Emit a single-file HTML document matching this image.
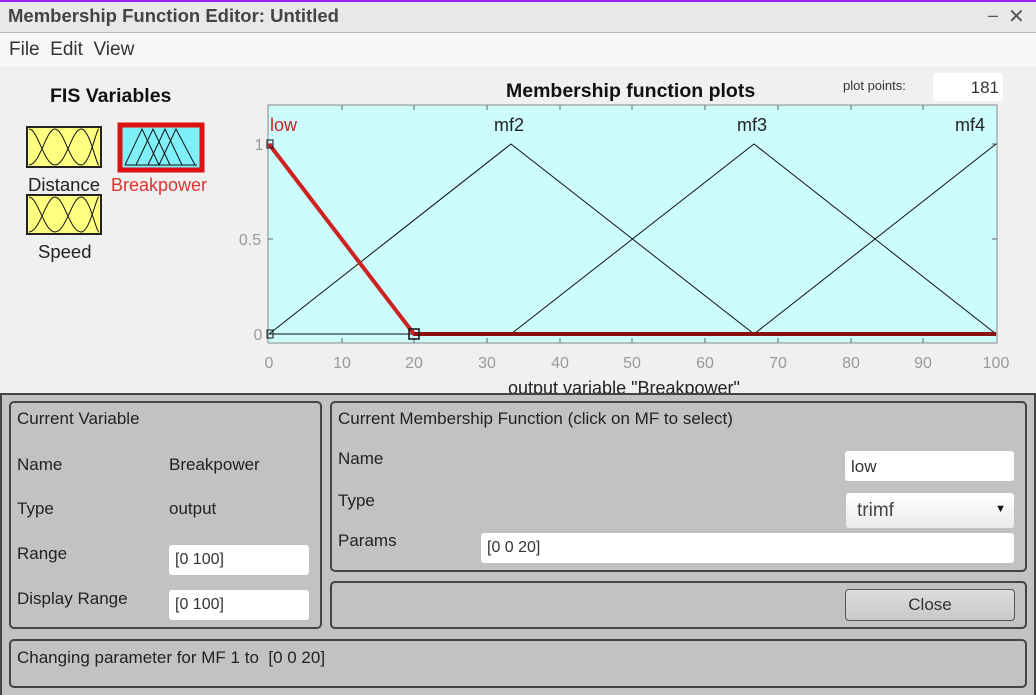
<!DOCTYPE html><html><head><style>
body{margin:0;width:1036px;height:695px;overflow:hidden;background:#f0f0f0;font-family:"Liberation Sans",sans-serif;position:relative}
.a{position:absolute}
.t{font-size:17px;color:#222}
.inp{position:absolute;background:#fff;border-radius:3px;font-size:16px;color:#333;box-sizing:border-box;padding:6px 0 0 6px}
.pn{position:absolute;border:2px solid #444;border-radius:5px;box-sizing:border-box}
</style></head><body>
<div class="a" style="left:0;top:0;width:1036px;height:2px;background:#a020f0"></div>
<div class="a" style="left:0;top:2px;width:1036px;height:30px;background:#e8e8e8;border-bottom:1px solid #bbb"></div>
<div class="a" style="left:8px;top:5px;font-size:18.5px;font-weight:bold;color:#444">Membership Function Editor: Untitled</div>
<div class="a" style="left:988px;top:5px;font-size:18px;color:#555">–</div>
<div class="a" style="left:1008px;top:4px;font-size:20px;color:#555">✕</div>
<div class="a" style="left:0;top:33px;width:1036px;height:34px;background:#f7f7f7"></div>
<div class="a" style="left:9px;top:39px;font-size:19px;color:#333">File&nbsp; Edit&nbsp; View</div>
<div class="a" style="left:50px;top:85px;font-size:19.5px;font-weight:bold;color:#111">FIS Variables</div>
<svg class="a" style="left:0;top:0" width="1036" height="400">
<g stroke="#111" stroke-width="1" fill="none">
<rect x="27" y="127" width="74" height="40" fill="#ffff80" stroke="#222" stroke-width="2"/>
<path d="M29 129 C38 129 44 165 55 165 M55 129 C46 129 40 165 29 165 M55 129 C64 129 70 165 81 165 M81 129 C72 129 66 165 55 165 M81 129 C90 129 96 165 99 165 M99 129 C96 129 90 165 81 165"/>
<rect x="27" y="195" width="74" height="39" fill="#ffff80" stroke="#222" stroke-width="2"/>
<path d="M29 197 C38 197 44 232 55 232 M55 197 C46 197 40 232 29 232 M55 197 C64 197 70 232 81 232 M81 197 C72 197 66 232 55 232 M81 197 C90 197 96 232 99 232 M99 197 C96 197 90 232 81 232"/>
<rect x="120" y="125" width="82" height="45" fill="#80f0f8" stroke="#dd1111" stroke-width="5"/>
<path d="M125 165 L142 129 L159 165 M136 165 L153 129 L170 165 M148 165 L165 129 L182 165 M159 165 L176 129 L195 165 M125 165 H197"/>
</g>
<text x="28" y="191" font-size="18.5" fill="#222" font-family="Liberation Sans">Distance</text>
<text x="111" y="191" font-size="18" fill="#dd3333" font-family="Liberation Sans">Breakpower</text>
<text x="38" y="258" font-size="18.5" fill="#222" font-family="Liberation Sans">Speed</text>
<text x="506" y="97" font-size="19.5" font-weight="bold" fill="#111" font-family="Liberation Sans">Membership function plots</text>
<text x="843" y="90" font-size="13" fill="#333" font-family="Liberation Sans">plot points:</text>
<rect x="268" y="105" width="729" height="238" fill="#ccfcfc" stroke="#888"/>
<g stroke="#666">
<path d="M342 105v5M414 105v5M487 105v5M560 105v5M632 105v5M705 105v5M778 105v5M851 105v5M923 105v5"/>
<path d="M342 343v-5M414 343v-5M487 343v-5M560 343v-5M632 343v-5M705 343v-5M778 343v-5M851 343v-5M923 343v-5"/>
<path d="M268 144h5M268 239h5M268 334h5M997 144h-5M997 239h-5M997 334h-5"/>
</g>
<g stroke="#111" fill="none" stroke-width="1">
<path d="M269 334 L511 144 L754 334 L996 144"/>
<path d="M511 334 L754 144 L996 334"/>
<path d="M269 334 H414"/>
</g>
<path d="M269 144 L414 334 H996" stroke="#cc2222" stroke-width="4" fill="none"/>
<path d="M414 334 H996" stroke="#881111" stroke-width="4"/>
<rect x="267" y="140" width="6" height="8" fill="none" stroke="#111"/>
<rect x="267" y="330" width="6" height="8" fill="none" stroke="#111"/>
<rect x="409" y="329" width="10" height="10" fill="none" stroke="#111" stroke-width="1.5"/>
<g font-family="Liberation Sans" font-size="18">
<text x="270" y="131" fill="#cc2222">low</text>
<text x="494" y="131" fill="#222">mf2</text>
<text x="737" y="131" fill="#222">mf3</text>
<text x="955" y="131" fill="#222">mf4</text>
</g>
<g font-family="Liberation Sans" font-size="16" fill="#999" text-anchor="middle">
<text x="259" y="150">1</text><text x="250" y="245">0.5</text><text x="258" y="340">0</text>
<text x="269" y="368">0</text><text x="342" y="368">10</text><text x="414" y="368">20</text><text x="487" y="368">30</text><text x="560" y="368">40</text><text x="632" y="368">50</text><text x="705" y="368">60</text><text x="778" y="368">70</text><text x="851" y="368">80</text><text x="923" y="368">90</text><text x="996" y="368">100</text>
</g>
<text x="508" y="394" font-size="18" fill="#222" font-family="Liberation Sans">output variable "Breakpower"</text>
</svg>
<div class="inp" style="left:933px;top:73px;width:70px;height:28px;text-align:right;padding:5px 4px 0 0;font-size:17px">181</div>
<div class="a" style="left:0;top:393px;width:1036px;height:302px;background:#c2c2c2;border-top:2px solid #444;border-left:2px solid #444;border-right:2px solid #444;box-sizing:border-box"></div>
<div class="pn" style="left:9px;top:401px;width:313px;height:228px"></div>
<div class="pn" style="left:330px;top:401px;width:697px;height:171px"></div>
<div class="pn" style="left:330px;top:581px;width:697px;height:48px"></div>
<div class="pn" style="left:9px;top:639px;width:1018px;height:49px"></div>
<div class="a t" style="left:17px;top:409px">Current Variable</div>
<div class="a t" style="left:17px;top:455px">Name</div>
<div class="a t" style="left:169px;top:455px">Breakpower</div>
<div class="a t" style="left:17px;top:499px">Type</div>
<div class="a t" style="left:169px;top:499px">output</div>
<div class="a t" style="left:17px;top:544px">Range</div>
<div class="a t" style="left:17px;top:589px">Display Range</div>
<div class="inp" style="left:169px;top:545px;width:140px;height:30px">[0 100]</div>
<div class="inp" style="left:169px;top:590px;width:140px;height:30px">[0 100]</div>
<div class="a t" style="left:338px;top:409px">Current Membership Function (click on MF to select)</div>
<div class="a t" style="left:338px;top:449px">Name</div>
<div class="a t" style="left:338px;top:491px">Type</div>
<div class="a t" style="left:338px;top:531px">Params</div>
<div class="inp" style="left:845px;top:451px;width:169px;height:30px;font-size:17px">low</div>
<div class="inp" style="left:846px;top:493px;width:168px;height:35px;background:linear-gradient(#fff,#eaeaea);font-size:19px;padding:7px 0 0 11px;color:#444">trimf<span style="position:absolute;right:8px;top:10px;font-size:11px;color:#111">▼</span></div>
<div class="inp" style="left:481px;top:533px;width:533px;height:30px">[0 0 20]</div>
<div class="a" style="left:845px;top:589px;width:170px;height:32px;border:1px solid #555;border-radius:4px;box-sizing:border-box;background:linear-gradient(#ddd,#c8c8c8);text-align:center;font-size:17px;color:#333;line-height:30px">Close</div>
<div class="a t" style="left:17px;top:648px">Changing parameter for MF 1 to&nbsp; [0 0 20]</div>
</body></html>
